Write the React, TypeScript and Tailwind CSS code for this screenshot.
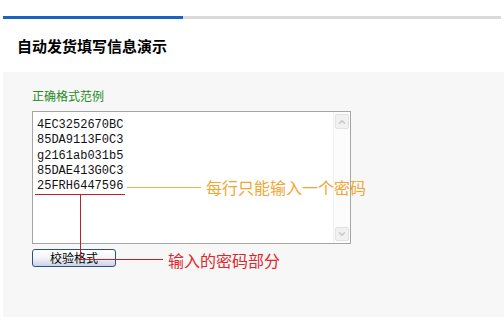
import { ChevronUp, ChevronDown } from 'lucide-react';

const samples = ['4EC3252670BC', '85DA9113F0C3', 'g2161ab031b5', '85DAE413G0C3', '25FRH6447596'];

function FakeTextarea() {
    return (
        <div className="relative flex w-[319px] h-[133px] bg-white border border-[#a5a5a5]">
            {/* Lines */}
            <div className="flex-1 pl-[4px] pt-[6px] font-['Liberation_Mono',monospace] text-[12px] leading-[15.3px] text-[#111]">
                {samples.map((s) => (
                    <div key={s}>{s}</div>
                ))}
            </div>
            {/* Scrollbar */}
            <div className="flex flex-col justify-between w-[17px] py-[2px] pr-[1px] bg-[#fcfcfc] border-l border-[#f0f0f0]">
                <div className="flex items-center justify-center h-[15px] w-[14px] mx-auto bg-[#f1f1f1] border border-[#e2e2e2] rounded-[2px]">
                    <ChevronUp className="w-[10px] h-[10px] text-[#c4c4c4]" strokeWidth={3} />
                </div>
                <div className="flex items-center justify-center h-[14px] w-[14px] mx-auto bg-[#f1f1f1] border border-[#e2e2e2] rounded-[2px]">
                    <ChevronDown className="w-[10px] h-[10px] text-[#c4c4c4]" strokeWidth={3} />
                </div>
            </div>
        </div>
    );
}

export default function App() {
    return (
        <div className="relative w-[504px] h-[321px] bg-white overflow-hidden font-['Noto_Sans_CJK_SC','Liberation_Sans',sans-serif]">
            {/* Tab bar */}
            <div className="flex ml-[3px] mt-[16px] w-[498px] h-[3px] bg-[#dadada]">
                <div className="w-[180px] h-full bg-[#1c62c4]" />
            </div>

            {/* Title */}
            <h1 className="pl-[17px] mt-[17px] text-[15px] leading-[20px] font-bold text-black">
                自动发货填写信息演示
            </h1>

            {/* Panel */}
            <div className="ml-[3px] mt-[16px] h-[245px] bg-[#f7f7f7] pl-[29px] pt-[16px]">
                <div className="text-[12px] leading-[16px] text-[#1f8a1f]">正确格式范例</div>
                <div className="mt-[7px]">
                    <FakeTextarea />
                </div>
                <button className="mt-[5px] w-[84px] h-[18px] rounded-[3px] border border-[#2d4f86] bg-gradient-to-b from-white via-[#f2f4f8] to-[#c9d3e6] text-[12px] leading-[14px] text-black">
                    校验格式
                </button>
            </div>

            {/* Annotations */}
            <div className="absolute left-[35px] top-[194px] w-[90px] h-[1px] bg-[#c0202a]" />
            <div className="absolute left-[80px] top-[194px] w-[1px] h-[66px] bg-[#c0202a]" />
            <div className="absolute left-[80px] top-[259px] w-[83px] h-[1px] bg-[#c0202a]" />
            <div className="absolute left-[168px] top-[250px] text-[16px] leading-[20px] text-[#e0262a]">
                输入的密码部分
            </div>

            <div className="absolute left-[127px] top-[187px] w-[74px] h-[1px] bg-[#f0b13a]" />
            <div className="absolute left-[206px] top-[177px] text-[16px] leading-[20px] text-[#f2a531]">
                每行只能输入一个密码
            </div>
        </div>
    );
}
